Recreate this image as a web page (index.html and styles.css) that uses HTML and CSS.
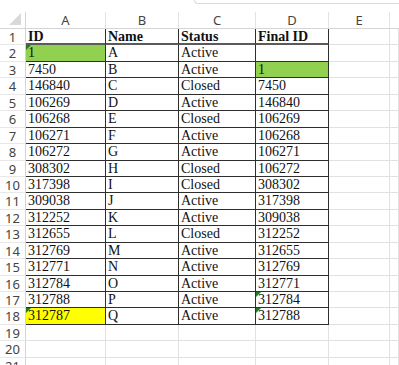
FILE: index.html
```html
<!DOCTYPE html>
<html>
<head>
<meta charset="utf-8">
<link rel="stylesheet" href="styles.css">
</head>
<body>
<div class="topbar"><div class="formula"></div></div>
<div class="sheet">
  <div class="corner"><svg width="13" height="13" viewBox="0 0 13 13"><polygon points="12,0 12,12 0,12" fill="#d9d9d9"/></svg></div>
  <div class="ch">A</div><div class="ch">B</div><div class="ch">C</div><div class="ch">D</div><div class="ch">E</div><div class="ch last"></div>

  <div class="rh">1</div><div class="c t hd">ID</div><div class="c t hd">Name</div><div class="c t hd">Status</div><div class="c t hd">Final ID</div><div class="c"></div><div class="c"></div>
  <div class="rh">2</div><div class="c t green mark">1</div><div class="c t">A</div><div class="c t">Active</div><div class="c t"></div><div class="c"></div><div class="c"></div>
  <div class="rh">3</div><div class="c t">7450</div><div class="c t">B</div><div class="c t">Active</div><div class="c t green">1</div><div class="c"></div><div class="c"></div>
  <div class="rh">4</div><div class="c t">146840</div><div class="c t">C</div><div class="c t">Closed</div><div class="c t">7450</div><div class="c"></div><div class="c"></div>
  <div class="rh">5</div><div class="c t">106269</div><div class="c t">D</div><div class="c t">Active</div><div class="c t">146840</div><div class="c"></div><div class="c"></div>
  <div class="rh">6</div><div class="c t">106268</div><div class="c t">E</div><div class="c t">Closed</div><div class="c t">106269</div><div class="c"></div><div class="c"></div>
  <div class="rh">7</div><div class="c t">106271</div><div class="c t">F</div><div class="c t">Active</div><div class="c t">106268</div><div class="c"></div><div class="c"></div>
  <div class="rh">8</div><div class="c t">106272</div><div class="c t">G</div><div class="c t">Active</div><div class="c t">106271</div><div class="c"></div><div class="c"></div>
  <div class="rh">9</div><div class="c t">308302</div><div class="c t">H</div><div class="c t">Closed</div><div class="c t">106272</div><div class="c"></div><div class="c"></div>
  <div class="rh">10</div><div class="c t">317398</div><div class="c t">I</div><div class="c t">Closed</div><div class="c t">308302</div><div class="c"></div><div class="c"></div>
  <div class="rh">11</div><div class="c t">309038</div><div class="c t">J</div><div class="c t">Active</div><div class="c t">317398</div><div class="c"></div><div class="c"></div>
  <div class="rh">12</div><div class="c t">312252</div><div class="c t">K</div><div class="c t">Active</div><div class="c t">309038</div><div class="c"></div><div class="c"></div>
  <div class="rh">13</div><div class="c t">312655</div><div class="c t">L</div><div class="c t">Closed</div><div class="c t">312252</div><div class="c"></div><div class="c"></div>
  <div class="rh">14</div><div class="c t">312769</div><div class="c t">M</div><div class="c t">Active</div><div class="c t">312655</div><div class="c"></div><div class="c"></div>
  <div class="rh">15</div><div class="c t">312771</div><div class="c t">N</div><div class="c t">Active</div><div class="c t">312769</div><div class="c"></div><div class="c"></div>
  <div class="rh">16</div><div class="c t">312784</div><div class="c t">O</div><div class="c t">Active</div><div class="c t">312771</div><div class="c"></div><div class="c"></div>
  <div class="rh">17</div><div class="c t">312788</div><div class="c t">P</div><div class="c t">Active</div><div class="c t mark">312784</div><div class="c"></div><div class="c"></div>
  <div class="rh">18</div><div class="c t yellow mark">312787</div><div class="c t">Q</div><div class="c t">Active</div><div class="c t mark">312788</div><div class="c"></div><div class="c"></div>
  <div class="rh">19</div><div class="c"></div><div class="c"></div><div class="c"></div><div class="c"></div><div class="c"></div><div class="c"></div>
  <div class="rh">20</div><div class="c"></div><div class="c"></div><div class="c"></div><div class="c"></div><div class="c"></div><div class="c"></div>
  <div class="rh">21</div><div class="c"></div><div class="c"></div><div class="c"></div><div class="c"></div><div class="c"></div><div class="c"></div>
</div>
</body>
</html>
```

FILE: styles.css
```css
html, body {
  margin: 0;
  padding: 0;
  background: #ffffff;
  overflow: hidden;
}
.topbar {
  height: 12px;
  display: flex;
}
.formula {
  margin-left: 194px;
  flex: 1;
  height: 3px;
  border: 1px solid #d9d9d9;
  border-top: none;
  border-right: none;
  border-bottom-left-radius: 4px;
}
.sheet {
  display: grid;
  grid-template-columns: 26px 80px 73px 77px 73px 61px 1fr;
  grid-template-rows: 17px repeat(21, 16.45px);
}
.sheet > div {
  box-sizing: border-box;
  position: relative;
}
.corner {
  border-right: 1px solid #d4d4d4;
  border-bottom: 1px solid #d4d4d4;
  display: flex;
  justify-content: flex-end;
  align-items: flex-end;
  padding: 0 3px 2px 0;
}
.corner svg { display: block; }
.ch {
  font-family: "Noto Sans", "Open Sans", sans-serif;
  font-size: 13px;
  color: #444;
  text-align: center;
  line-height: 16px;
  border-right: 1px solid #e3e3e3;
  border-bottom: 1px solid #d4d4d4;
}
.ch.last { border-right: none; }
.rh {
  font-family: "Noto Sans", "Open Sans", sans-serif;
  font-size: 13px;
  color: #444;
  text-align: center;
  line-height: 16px;
  border-right: 1px solid #d4d4d4;
  border-bottom: 1px solid #e8e8e8;
}
.c {
  border-right: 1px solid #e1e1e1;
  border-bottom: 1px solid #e1e1e1;
  font-family: "Liberation Serif", "Times New Roman", serif;
  font-size: 14px;
  color: #111;
  line-height: 16px;
  padding-left: 2px;
  white-space: nowrap;
  overflow: hidden;
}
.c.t {
  border-right-color: #2e2e2e;
  border-bottom-color: #2e2e2e;
}
.c.hd {
  font-weight: bold;
  border-bottom: 2px solid #5a5a5a;
  line-height: 15px;
}
.green { background: #92d050; }
.yellow { background: #ffff00; }
.mark::before {
  content: "";
  position: absolute;
  left: 0;
  top: 0;
  border-top: 5px solid #1e7b22;
  border-right: 5px solid transparent;
}
```
